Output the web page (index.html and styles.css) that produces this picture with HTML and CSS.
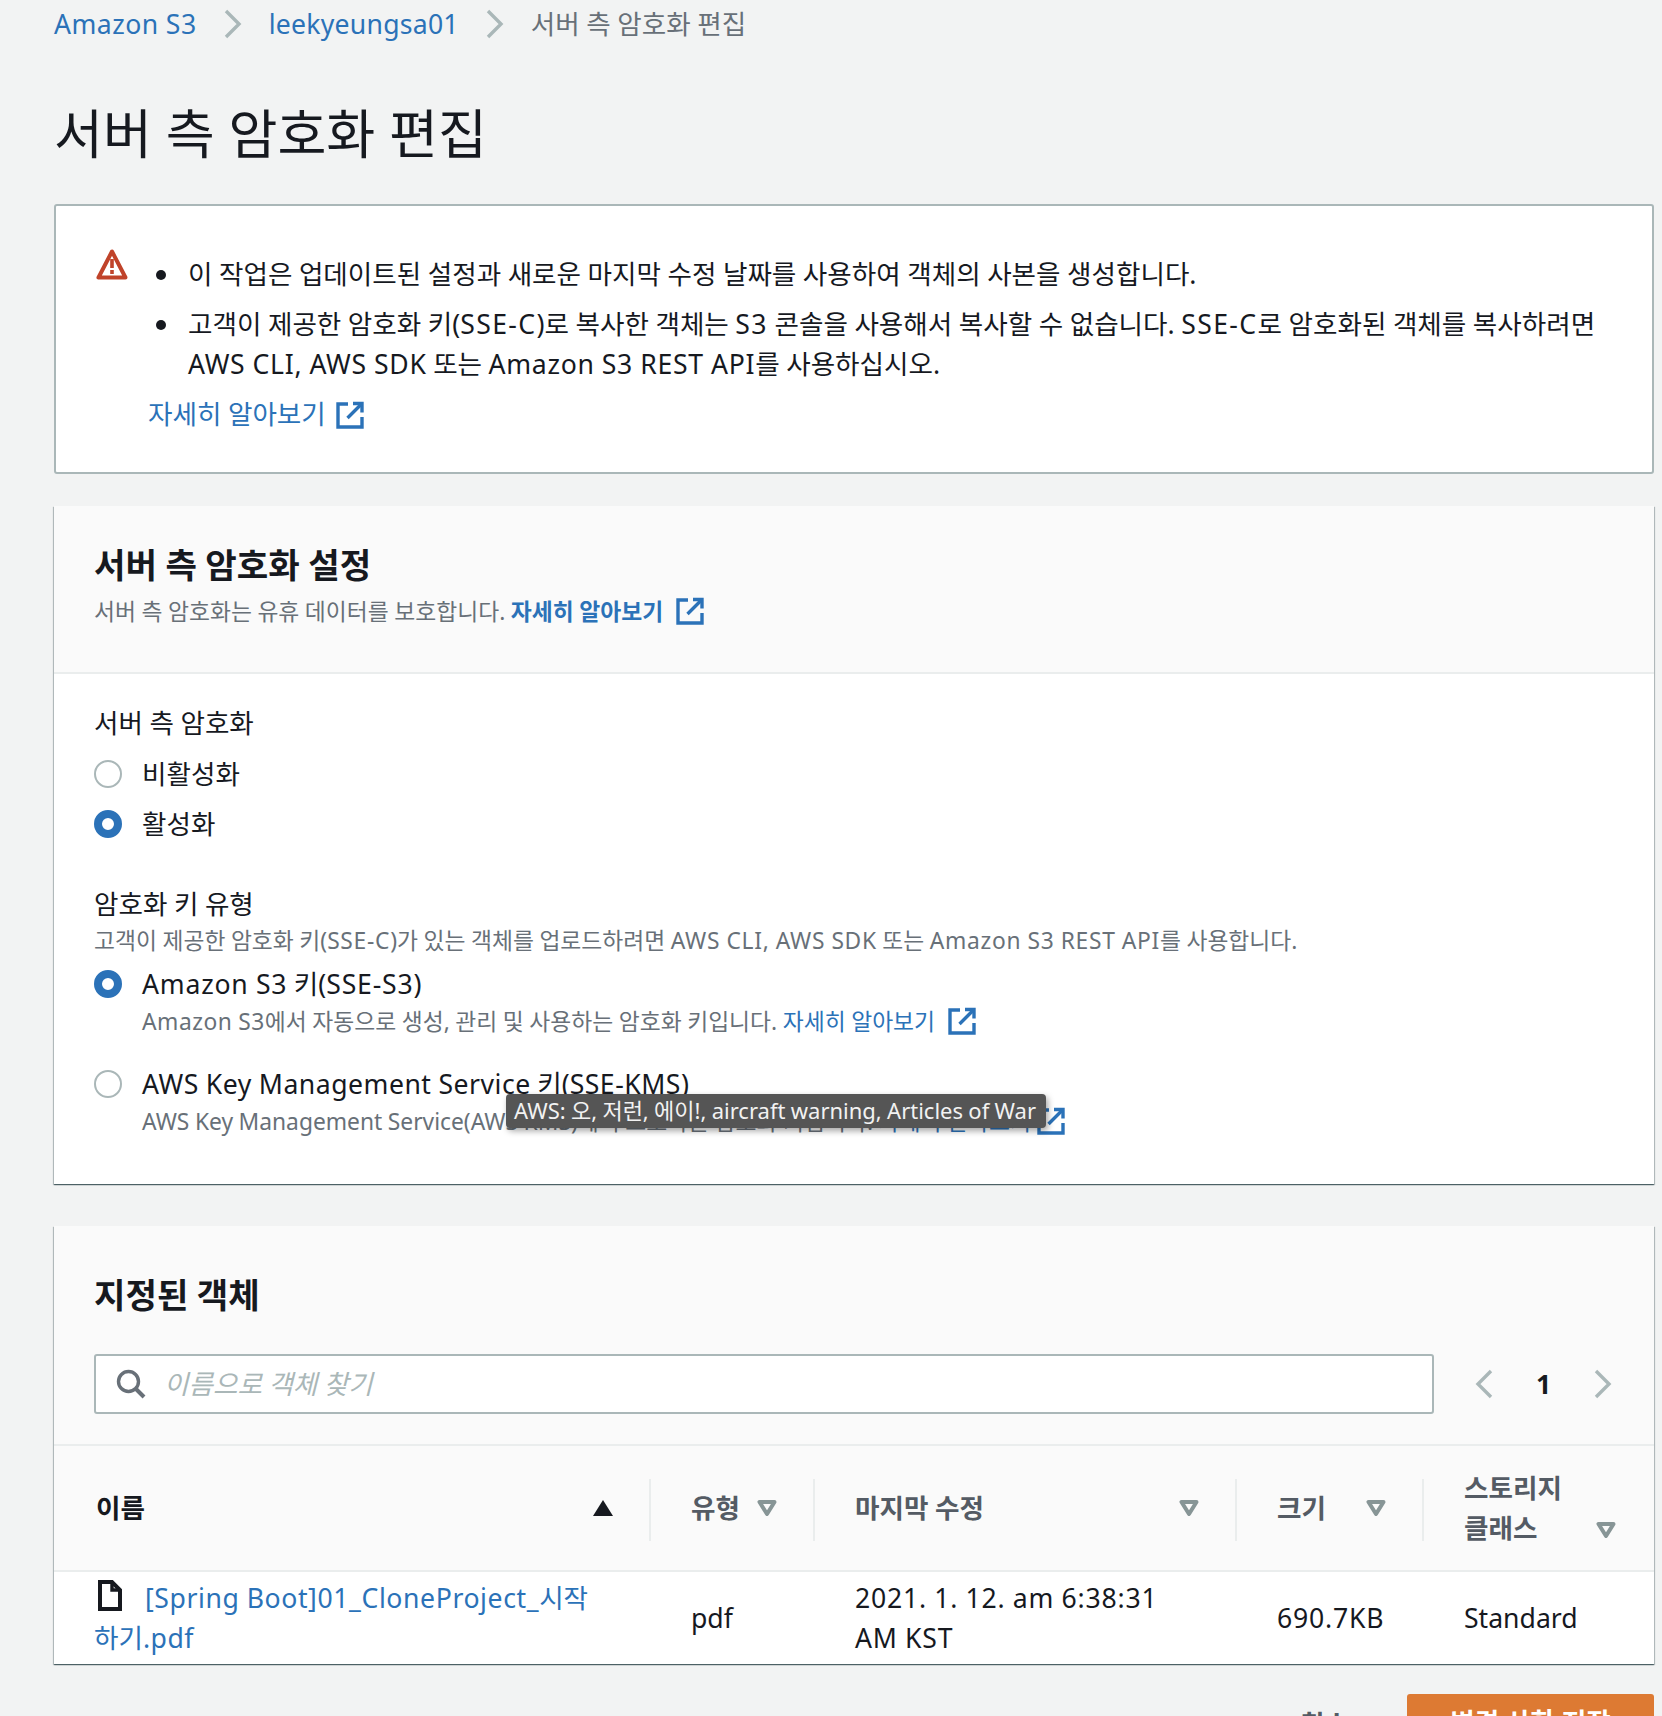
FILE: index.html
```html
<!DOCTYPE html>
<html lang="ko">
<head>
<meta charset="utf-8">
<title>서버 측 암호화 편집</title>
<link rel="stylesheet" href="styles.css">
</head>
<body>
<svg class="defs" width="0" height="0" aria-hidden="true">
  <symbol id="ext" viewBox="0 0 28 28">
    <path d="M12 3H2v23h24V16" fill="none" stroke="currentColor" stroke-width="3.4"/>
    <path d="M17 2.500h9v9" fill="none" stroke="currentColor" stroke-width="3.4"/>
    <path d="M25 3.500L11.500 17" fill="none" stroke="currentColor" stroke-width="3.4"/>
  </symbol>
  <symbol id="filter" viewBox="0 0 20 16">
    <path d="M2.500 2h15L10 14z" fill="none" stroke="currentColor" stroke-width="4" stroke-linejoin="round"/>
  </symbol>
</svg>

<nav class="crumbs">
  <a class="en" href="#">Amazon S3</a>
  <svg class="crumb-sep" viewBox="0 0 18 30"><path d="M2 2l13 13L2 28" fill="none" stroke="#aab7b8" stroke-width="3.400"/></svg>
  <a class="en-thin" href="#">leekyeungsa01</a>
  <svg class="crumb-sep" viewBox="0 0 18 30"><path d="M2 2l13 13L2 28" fill="none" stroke="#aab7b8" stroke-width="3.400"/></svg>
  <span class="crumb-now">서버 측 암호화 편집</span>
</nav>

<h1 class="page-title">서버 측 암호화 편집</h1>

<section class="alert">
  <svg class="alert-icon" viewBox="0 0 32 32"><path d="M16 3.500L2.500 29.500h27z" fill="none" stroke="#c0432a" stroke-width="4" stroke-linejoin="round"/><path d="M14.200 11h3.600v9h-3.600zM14.200 22h3.600v4h-3.600z" fill="#c0432a"/></svg>
  <div class="alert-body">
    <ul class="alert-list">
      <li>이 작업은 업데이트된 설정과 새로운 마지막 수정 날짜를 사용하여 객체의 사본을 생성합니다.</li>
      <li>고객이 제공한 암호화 키(<span class="num">SSE-C</span>)로 복사한 객체는 <span class="num">S3</span> 콘솔을 사용해서 복사할 수 없습니다. <span class="num">SSE-C</span>로 암호화된 객체를 복사하려면 <span class="en">AWS CLI, AWS SDK</span> 또는 <span class="en">Amazon S3 REST API</span>를 사용하십시오.</li>
    </ul>
    <a class="link alert-link" href="#">자세히 알아보기<svg class="ext"><use href="#ext"/></svg></a>
  </div>
</section>

<section class="panel panel-settings">
  <header class="panel-head">
    <h2 class="panel-title">서버 측 암호화 설정</h2>
    <p class="small muted">서버 측 암호화는 유휴 데이터를 보호합니다. <a class="link strong" href="#">자세히 알아보기<svg class="ext"><use href="#ext"/></svg></a></p>
  </header>
  <div class="panel-body">
    <div class="field-label">서버 측 암호화</div>
    <div class="radio-row first-radio"><span class="radio"></span>비활성화</div>
    <div class="radio-row"><span class="radio on"></span>활성화</div>

    <div class="field-label key-label">암호화 키 유형</div>
    <p class="small muted key-desc">고객이 제공한 암호화 키(<span class="en">SSE-C</span>)가 있는 객체를 업로드하려면 <span class="en">AWS CLI, AWS SDK</span> 또는 <span class="en">Amazon S3 REST API</span>를 사용합니다.</p>
    <div class="radio-row"><span class="radio on"></span><span><span class="num">Amazon S3</span> 키(<span class="num">SSE-S3</span>)</span></div>
    <p class="small muted radio-sub"><span class="en">Amazon S3</span>에서 자동으로 생성, 관리 및 사용하는 암호화 키입니다. <a class="link" href="#">자세히 알아보기<svg class="ext"><use href="#ext"/></svg></a></p>
    <div class="radio-row kms-row"><span class="radio"></span><span><span class="en">AWS Key Management Service</span> 키(<span class="en">SSE-KMS</span>)</span></div>
    <p class="small muted radio-sub tip-host">AWS Key Management Service(AWS KMS)에서 보호하는 암호화 키입니다. <a class="link" href="#">자세히 알아보기<svg class="ext"><use href="#ext"/></svg></a>
      <span class="tooltip">AWS: 오, 저런, 에이!, aircraft warning, Articles of War</span>
    </p>
  </div>
</section>

<section class="panel panel-objects">
  <header class="objects-head">
    <h2 class="panel-title">지정된 객체</h2>
    <div class="tools">
      <label class="search">
        <svg class="search-icon" viewBox="0 0 30 30"><circle cx="12.500" cy="12.500" r="10" fill="none" stroke="#687078" stroke-width="3.400"/><path d="M19.500 19.500L28 28" stroke="#687078" stroke-width="4" fill="none"/></svg>
        <span class="placeholder">이름으로 객체 찾기</span>
      </label>
      <div class="pager">
        <svg class="pager-arrow" viewBox="0 0 18 30"><path d="M16 2L3 15l13 13" fill="none" stroke="#aab7b8" stroke-width="3.400"/></svg>
        <span class="pager-num">1</span>
        <svg class="pager-arrow" viewBox="0 0 18 30"><path d="M2 2l13 13L2 28" fill="none" stroke="#aab7b8" stroke-width="3.400"/></svg>
      </div>
    </div>
  </header>
  <div class="table">
    <div class="th th-name"><span>이름</span><svg class="sort" viewBox="0 0 20 16"><path d="M10 0l10 16H0z" fill="#16191f"/></svg></div>
    <div class="th"><span class="th-text">유형</span><svg class="filter"><use href="#filter"/></svg></div>
    <div class="th"><span class="th-text">마지막 수정</span><svg class="filter"><use href="#filter"/></svg></div>
    <div class="th"><span class="th-text">크기</span><svg class="filter"><use href="#filter"/></svg></div>
    <div class="th th-class"><span class="th-text">스토리지<br>클래스</span><svg class="filter filter-low"><use href="#filter"/></svg></div>

    <div class="td td-name"><svg class="file" viewBox="0 0 24 31"><path d="M2 2h12l8 8v19H2z" fill="none" stroke="#16191f" stroke-width="4"/><path d="M14 2v8h8" fill="none" stroke="#16191f" stroke-width="3.400"/></svg><a class="link" href="#"><span class="file-name">[Spring Boot]01_CloneProject_</span>시작하기<span class="en">.pdf</span></a></div>
    <div class="td">pdf</div>
    <div class="td"><span class="num">2021. 1. 12. am 6:38:31<br>AM KST</span></div>
    <div class="td"><span class="num">690.7KB</span></div>
    <div class="td">Standard</div>
  </div>
</section>

<footer class="actions">
  <a class="cancel" href="#">취소</a>
  <button class="save" type="button">변경 사항 저장</button>
</footer>
</body>
</html>
```
FILE: styles.css
```css
* { box-sizing: border-box; }
html, body { height: 1716px; overflow: hidden; }
body {
  margin: 0;
  padding: 0 8px 0 54px;
  background: #f2f3f3;
  color: #16191f;
  font-family: "Noto Sans", "Noto Sans CJK KR", sans-serif;
  font-size: 26.6px;
  line-height: 40px;
  word-spacing: -0.4px;
}
.defs { position: absolute; }
a { text-decoration: none; }
p { margin: 0; }
.en { letter-spacing: .5px; }
.en-thin { letter-spacing: .25px; }
.num { letter-spacing: .8px; }
.alert .en, .key-desc .en { letter-spacing: .7px; }
.alert .num { letter-spacing: 1.4px; }
.file-name { letter-spacing: .6px; }
.link { color: #2b72b8; }
.strong { font-weight: 700; }
.small { font-size: 22.8px; line-height: 38px; }
.muted { color: #687078; }
.ext { width: 28px; height: 28px; margin-left: 13px; vertical-align: -5px; color: #2b72b8; }
.alert-link .ext { margin-left: 10px; }
.tip-host .ext { margin-left: 6px; }

.crumbs { display: flex; align-items: center; height: 48px; }
.crumbs a { color: #2b72b8; }
.crumb-sep { width: 18px; height: 30px; margin: 0 27px; }
.crumb-now { color: #687078; }

.page-title { margin: 56px 0 0; font-size: 53.200px; font-weight: 400; line-height: 60px; height: 100px; word-spacing: 0; }

.alert {
  display: flex;
  height: 270px;
  padding: 42px 40px 0 40px;
  background: #fff;
  border: 2px solid #aab7b8;
  border-radius: 3px;
}
.alert-icon { flex: none; width: 32px; height: 32px; }
.alert-body { flex: 1; margin: 6px 0 0 20px; }
.alert-list { margin: 0; padding: 0 0 0 40px; list-style: none; }
.alert-list li { position: relative; margin-bottom: 10px; }
.alert-list li::before {
  content: "";
  position: absolute;
  left: -32px;
  top: 16px;
  width: 10px;
  height: 10px;
  border-radius: 50%;
  background: #16191f;
}
.alert-link { display: block; margin-top: 9px; }

.panel {
  background: #fff;
  box-shadow: 0 1px 1px 0 rgba(0,28,36,.5), 1px 1px 1px 0 rgba(0,28,36,.2), -1px 1px 1px 0 rgba(0,28,36,.2);
}
.panel-settings { margin-top: 32px; height: 678px; }
.panel-head { height: 168px; padding: 38px 40px 0; background: #fafafa; border-bottom: 2px solid #eaeded; }
.panel-title { margin: 0; font-size: 34.200px; line-height: 42px; font-weight: 700; }
.panel-head .small { margin-top: 7px; }
.panel-body { padding: 29px 40px 0; }
.field-label { line-height: 40px; }
.radio-row { display: flex; align-items: center; height: 50px; }
.first-radio { margin-top: 6px; }
.radio { flex: none; width: 28px; height: 28px; margin-right: 20px; border: 2px solid #aab7b8; border-radius: 50%; background: #fff; }
.radio.on { border: 8px solid #2b72b8; }
.key-label { margin-top: 35px; }
.key-desc { line-height: 33px; margin-bottom: 2px; }
.radio-sub { margin-top: -6px; padding-left: 48px; line-height: 38px; }
.kms-row { margin-top: 18px; }
.tip-host { position: relative; margin-top: -6px; }
.tooltip {
  position: absolute;
  left: 412px;
  top: -9px;
  width: 540px;
  height: 34px;
  padding: 0 8px;
  background: #555;
  border-radius: 4px;
  color: #f2f2f2;
  font-size: 22px;
  line-height: 32px;
  white-space: nowrap;
  box-shadow: 2px 3px 6px rgba(0,0,0,.35);
}

.panel-objects { margin-top: 42px; height: 438px; }
.objects-head { height: 220px; padding: 48px 40px 0; background: #fafafa; border-bottom: 2px solid #eaeded; }
.tools { display: flex; margin-top: 38px; }
.search { display: flex; align-items: center; width: 1340px; height: 60px; padding-left: 20px; background: #fff; border: 2px solid #aab7b8; border-radius: 3px; }
.search-icon { width: 30px; height: 30px; }
.placeholder { margin-left: 18px; color: #aab7b8; font-style: italic; }
.pager { display: flex; align-items: center; margin-left: 41px; height: 60px; }
.pager-arrow { width: 18px; height: 30px; }
.pager-num { width: 101px; text-align: center; font-weight: 700; }

.table { display: grid; grid-template-columns: 597px 164px 422px 187px 230px; }
.th {
  position: relative;
  display: flex;
  align-items: center;
  justify-content: space-between;
  height: 126px;
  padding: 0 38px 0 40px;
  background: #fafafa;
  border-bottom: 2px solid #eaeded;
  font-weight: 700;
}
.th::after { content: ""; position: absolute; right: 0; top: 33px; height: 62px; width: 2px; background: #eaeded; }
.th:nth-child(5)::after { display: none; }
.th-name { padding-left: 42px; }
.th-text { color: #545b64; }
.th-class { line-height: 40px; }
.sort { width: 20px; height: 16px; }
.filter { flex: none; width: 20px; height: 16px; color: #879596; }
.filter-low { align-self: flex-end; margin-bottom: 32px; }
.td { display: flex; align-items: center; height: 91px; padding: 0 38px 0 40px; }
.td-name { display: block; padding: 6px 60px 0 40px; }
.file { width: 24px; height: 31px; margin: 0 23px 0 4px; vertical-align: -3px; }

.actions { display: flex; justify-content: flex-end; margin-top: 30px; }
.cancel { margin-right: 58px; padding-top: 10px; color: #545b64; font-weight: 700; }
.save { width: 247px; height: 66px; padding: 0 0 10px; border: 0; border-radius: 3px; background: #dd7a33; color: #fff; font: 700 26.6px/40px "Noto Sans", "Noto Sans CJK KR", sans-serif; }
```
